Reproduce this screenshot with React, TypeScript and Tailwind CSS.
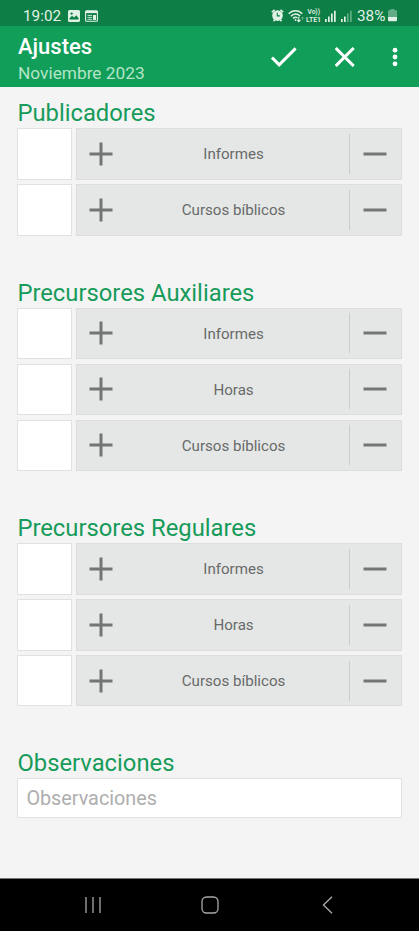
import React from "react";

type Section = {
  title: string;
  rows: string[];
};

const SECTIONS: Section[] = [
  { title: "Publicadores", rows: ["Informes", "Cursos bíblicos"] },
  { title: "Precursores Auxiliares", rows: ["Informes", "Horas", "Cursos bíblicos"] },
  { title: "Precursores Regulares", rows: ["Informes", "Horas", "Cursos bíblicos"] },
];

function StatusBar() {
  return (
    <div className="h-[26px] shrink-0 bg-[#0d7e46] pl-[23px] pr-[22px] pt-[5px] flex items-center justify-between text-[#e0f2e6]">
      <div className="flex items-center">
        <span className="w-[45px] text-[15.3px] leading-5 whitespace-nowrap">19:02</span>
        <svg width="12" height="12" viewBox="0 0 12 12">
          <path
            fill="currentColor"
            fillRule="evenodd"
            d="M1.5 0h9A1.5 1.5 0 0 1 12 1.5v9a1.5 1.5 0 0 1-1.5 1.5h-9A1.5 1.5 0 0 1 0 10.5v-9A1.5 1.5 0 0 1 1.5 0ZM1.5 9.5h9V8L8.2 5.2 6.2 7.6 4 5.8 1.5 8.3ZM3.6 2.4a1.2 1.2 0 1 0 0 2.4 1.2 1.2 0 0 0 0-2.4Z"
          />
        </svg>
        <svg className="ml-[5px]" width="13" height="12" viewBox="0 0 13 12" fill="none" stroke="currentColor">
          <rect x=".6" y=".9" width="11.8" height="10.4" rx="1" strokeWidth="1.1" />
          <path d="M.5 2h12" strokeWidth="2.2" />
          <path d="M2.5 5.4h4.5M2.5 7.4h4.5M2.5 9.3h4.5" strokeWidth=".9" />
          <path d="M9.5 5v5" strokeWidth="3" />
        </svg>
      </div>

      <div className="flex items-center">
        <svg width="13" height="13" viewBox="0 0 13 13">
          <path d="M.8 3.2 3.6.8M12.2 3.2 9.4.8M2.5 12.2l1.5-2M10.5 12.2l-1.5-2" stroke="currentColor" strokeWidth="1.6" />
          <circle cx="6.5" cy="6.6" r="5.3" fill="currentColor" />
          <path d="M6.3 3.8v3.1h2.6" fill="none" stroke="#0d7e46" strokeWidth="1.1" />
        </svg>
        <svg className="ml-[4px]" width="17" height="14" viewBox="0 0 17 14" fill="none" stroke="currentColor" strokeWidth="1.5">
          <path d="M.7 4.8c3.8-4.2 9.8-4.2 13.6 0M2.9 7.2c2.7-2.9 6.5-2.9 9.2-.2M5.1 9.4c1.5-1.5 3-1.5 4.4-.6" />
          <circle cx="7.5" cy="11" r=".9" fill="currentColor" stroke="none" />
          <path d="M10.8 7.8v4.8M9.2 11l1.6 1.7 1.6-1.7" strokeWidth="1.1" />
          <path d="M14.6 11.3V8M13.3 9.5l1.3-1.4 1.3 1.4" strokeWidth=".8" opacity=".45" />
        </svg>
        <svg className="ml-px" width="16" height="15" viewBox="0 0 16 15" fill="currentColor">
          <text x="1.5" y="6" fontSize="6.4" fontWeight="600" textLength="12.5" lengthAdjust="spacingAndGlyphs">
            Vo))
          </text>
          <text x="0" y="13.6" fontSize="6.6" fontWeight="600" textLength="15" lengthAdjust="spacingAndGlyphs">
            LTE1
          </text>
        </svg>
        <svg className="ml-[3px]" width="11" height="12" viewBox="0 0 11 12" fill="currentColor">
          <path d="M0 9h1.7v3H0zM3 6.5h1.7V12H3zM6 3.5h1.7V12H6zM9 .7h1.7V12H9z" />
        </svg>
        <svg className="ml-[5px]" width="11" height="12" viewBox="0 0 11 12" fill="currentColor">
          <path d="M0 9h1.7v3H0zM3 6.5h1.7V12H3z" />
          <path d="M6 3.5h1.7V12H6zM9 .7h1.7V12H9z" opacity=".4" />
        </svg>
        <span className="ml-[5px] w-[28px] text-[15.3px] leading-5 whitespace-nowrap">38%</span>
        <svg className="ml-[3px]" width="9" height="13" viewBox="0 0 9 13" fill="currentColor">
          <path d="M2.5 0h4v1.3H8a1 1 0 0 1 1 1V8H0V2.3a1 1 0 0 1 1-1h1.5z" opacity=".4" />
          <path d="M0 8h9v3.3a1 1 0 0 1-1 1H1a1 1 0 0 1-1-1z" />
        </svg>
      </div>
    </div>
  );
}

function AppBar() {
  return (
    <header className="h-[61px] shrink-0 bg-[#119e58] pl-[18px] pr-[21px] flex justify-between">
      <div className="pt-[8px]">
        <h1 className="text-[22px] leading-[26px] font-medium text-white">Ajustes</h1>
        <p className="text-[17.3px] leading-[26px] text-[#b3e4c8]">Noviembre 2023</p>
      </div>
      <div className="flex items-center text-white">
        <button type="button" aria-label="Guardar">
          <svg width="26" height="20" viewBox="0 0 26 20" fill="none" stroke="currentColor" strokeWidth="3">
            <path d="m1 10.6 7.2 7.2L24.6 1.4" />
          </svg>
        </button>
        <button type="button" aria-label="Cancelar" className="ml-[38px]">
          <svg width="20" height="20" viewBox="0 0 20 20" fill="none" stroke="currentColor" strokeWidth="3">
            <path d="m.7 1 18 18M18.7 1 .7 19" />
          </svg>
        </button>
        <button type="button" aria-label="Más opciones" className="ml-[37px]">
          <svg width="6" height="20" viewBox="0 0 6 20" fill="currentColor">
            <circle cx="3" cy="3.2" r="2.4" />
            <circle cx="3" cy="10" r="2.4" />
            <circle cx="3" cy="16.8" r="2.4" />
          </svg>
        </button>
      </div>
    </header>
  );
}

function CounterRow({ label }: { label: string }) {
  return (
    <div className="h-[51.4px] flex gap-[4px]">
      <div className="w-[54.6px] bg-white border border-[#e0e2e1]" />
      <div className="flex-1 bg-[#e5e7e6] border border-[#dcdedd] flex items-center text-[#747675]">
        <button type="button" aria-label={`Sumar ${label}`} className="pl-[11px]">
          <svg width="26" height="26" viewBox="0 0 26 26" stroke="currentColor" strokeWidth="3">
            <path d="M1.5 13h23M13 1.5v23" />
          </svg>
        </button>
        <span className="flex-1 pt-[0.8px] pl-[4px] text-center text-[15.1px] leading-5 text-[#686a69]">{label}</span>
        <div className="w-px h-[40px] bg-[#cbcdcc]" />
        <button type="button" aria-label={`Restar ${label}`} className="w-[50.5px] flex justify-center">
          <svg width="24" height="26" viewBox="0 0 24 26" stroke="currentColor" strokeWidth="3">
            <path d="M.5 13h23" />
          </svg>
        </button>
      </div>
    </div>
  );
}

function SectionTitle({ children }: { children: React.ReactNode }) {
  return <h2 className="h-[30px] text-[23.8px] leading-[30px] text-[#179b5a] whitespace-nowrap">{children}</h2>;
}

function NavigationBar() {
  return (
    <nav className="h-[53px] shrink-0 bg-black border-t border-[#777] pl-[84px] pr-[83px] flex items-center justify-between text-[#a8a8a8]">
      <svg width="18" height="18" viewBox="0 0 18 18" stroke="currentColor" strokeWidth="1.3">
        <path d="M2 1v16M9 1v16M16 1v16" />
      </svg>
      <svg width="18" height="18" viewBox="0 0 18 18" fill="none" stroke="currentColor" strokeWidth="1.3">
        <rect x="1" y="1" width="16" height="16" rx="4.5" />
      </svg>
      <svg width="18" height="18" viewBox="0 0 18 18" fill="none" stroke="currentColor" strokeWidth="1.4">
        <path d="M14 .8 5.5 9l8.5 8.2" />
      </svg>
    </nav>
  );
}

export default function App() {
  return (
    <div className="w-full h-[931px] flex flex-col overflow-hidden bg-[#f4f4f4] font-[Roboto,sans-serif]">
      <StatusBar />
      <AppBar />
      <main className="flex-1 min-h-0 pt-[11.4px] px-[17.4px] flex flex-col gap-[42px]">
        {SECTIONS.map((section) => (
          <section key={section.title}>
            <SectionTitle>{section.title}</SectionTitle>
            <div className="flex flex-col gap-[4.6px]">
              {section.rows.map((row) => (
                <CounterRow key={row} label={row} />
              ))}
            </div>
          </section>
        ))}
        <section>
          <SectionTitle>Observaciones</SectionTitle>
          <input
            type="text"
            placeholder="Observaciones"
            className="block w-full h-[39.5px] pt-px px-[8px] bg-white border border-[#e0e2e1] text-[19.8px] text-[#686a69] placeholder:text-[#aeaeae]"
          />
        </section>
      </main>
      <NavigationBar />
    </div>
  );
}
